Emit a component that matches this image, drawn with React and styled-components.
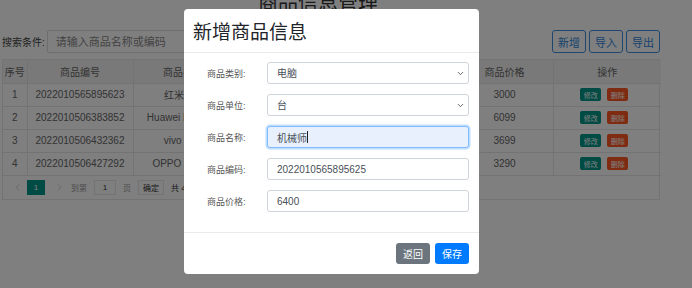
import styled, { createGlobalStyle } from 'styled-components'
import { ChevronDown, ChevronLeft, ChevronRight } from 'lucide-react'

const products = [
  { id: 1, code: '2022010565895623', name: '红米K50', type: '手机', unit: '台', price: 3000 },
  { id: 2, code: '2022010506383852', name: 'Huawei P50 Pro', type: '手机', unit: '台', price: 6099 },
  { id: 3, code: '2022010506432362', name: 'vivo S12', type: '手机', unit: '台', price: 3699 },
  { id: 4, code: '2022010506427292', name: 'OPPO Reno7', type: '手机', unit: '台', price: 3290 },
]

/*---> Component <---*/
function App() {
  return (
    <>
      <GlobalStyle />
      <Page>
        <Title>商品信息管理</Title>
        <Toolbar>
          <SearchLabel>搜索条件:</SearchLabel>
          <SearchInput placeholder="请输入商品名称或编码" />
          <Spacer />
          <OutlineButton>新增</OutlineButton>
          <OutlineButton>导入</OutlineButton>
          <OutlineButton>导出</OutlineButton>
        </Toolbar>
        <TableBox>
          <Table>
            <colgroup>
              <col width="24" />
              <col width="106" />
              <col width="100" />
              <col width="110" />
              <col width="113" />
              <col width="97" />
              <col width="108" />
            </colgroup>
            <thead>
              <tr>
                <Th>序号</Th>
                <Th>商品编号</Th>
                <Th>商品名称</Th>
                <Th>商品类别</Th>
                <Th>商品单位</Th>
                <Th>商品价格</Th>
                <Th>操作</Th>
              </tr>
            </thead>
            <tbody>
              {products.map((p) => (
                <tr key={p.id}>
                  <Td>{p.id}</Td>
                  <Td>{p.code}</Td>
                  <Td>{p.name}</Td>
                  <Td>{p.type}</Td>
                  <Td>{p.unit}</Td>
                  <Td>{p.price}</Td>
                  <Td>
                    <Actions>
                      <SmallButton $color="#009688">修改</SmallButton>
                      <SmallButton $color="#ff5722">删除</SmallButton>
                    </Actions>
                  </Td>
                </tr>
              ))}
            </tbody>
          </Table>
          <Pager>
            <PagerArrow><ChevronLeft size={11} strokeWidth={1.5} /></PagerArrow>
            <PageCurrent>1</PageCurrent>
            <PagerArrow><ChevronRight size={11} strokeWidth={1.5} /></PagerArrow>
            <PagerText>到第</PagerText>
            <PagerInput>1</PagerInput>
            <PagerText>页</PagerText>
            <PagerButton>确定</PagerButton>
            <PagerText $dark>共 4 条</PagerText>
          </Pager>
        </TableBox>
      </Page>

      <Overlay>
        <Dialog>
          <DialogHeader>新增商品信息</DialogHeader>
          <DialogBody>
            <FormRow>
              <FieldLabel>商品类别:</FieldLabel>
              <SelectWrap>
                <Select defaultValue="电脑">
                  <option>电脑</option>
                  <option>手机</option>
                </Select>
                <Caret><ChevronDown size={9} strokeWidth={2} /></Caret>
              </SelectWrap>
            </FormRow>
            <FormRow>
              <FieldLabel>商品单位:</FieldLabel>
              <SelectWrap>
                <Select defaultValue="台">
                  <option>台</option>
                  <option>个</option>
                </Select>
                <Caret><ChevronDown size={9} strokeWidth={2} /></Caret>
              </SelectWrap>
            </FormRow>
            <FormRow>
              <FieldLabel>商品名称:</FieldLabel>
              <Field $focused>
                机械师<Cursor />
              </Field>
            </FormRow>
            <FormRow>
              <FieldLabel>商品编码:</FieldLabel>
              <Field>2022010565895625</Field>
            </FormRow>
            <FormRow>
              <FieldLabel>商品价格:</FieldLabel>
              <Field>6400</Field>
            </FormRow>
          </DialogBody>
          <DialogFooter>
            <SolidButton $color="#6c757d">返回</SolidButton>
            <SolidButton $color="#007bff">保存</SolidButton>
          </DialogFooter>
        </Dialog>
      </Overlay>
    </>
  )
}

/*---> Styles <---*/
const GlobalStyle = createGlobalStyle`
  html, body {
    margin: 0;
    padding: 0;
    background: #fff;
    overflow: hidden;
    font-family: "Liberation Sans", "Noto Sans CJK SC", sans-serif;
  }
  * {
    box-sizing: border-box;
  }
`

const Page = styled.div`
  width: 692px;
  height: 288px;
  padding: 0 32px 0 2px;
  margin-top: -9px;
`

const Title = styled.h2`
  margin: 0;
  padding-left: 256px;
  font-size: 20px;
  font-weight: 400;
  line-height: 24px;
  height: 23px;
  color: #333;
`

const Toolbar = styled.div`
  display: flex;
  align-items: center;
  height: 23px;
  margin-top: 16px;
`

const SearchLabel = styled.span`
  font-size: 10px;
  color: #444;
  margin-right: 2px;
`

const SearchInput = styled.input`
  width: 260px;
  height: 23px;
  border: 1px solid #dcdcdc;
  border-radius: 2px;
  padding: 0 8px;
  font-size: 11px;
  font-family: inherit;
  &::placeholder {
    color: #888;
  }
`

const Spacer = styled.div`
  flex: 1;
`

const OutlineButton = styled.button`
  height: 23px;
  width: 34px;
  margin-left: 3px;
  padding: 0;
  border: 1px solid #3d8fe0;
  border-radius: 3px;
  background: #fff;
  color: #2f86dc;
  font-size: 11px;
  font-family: inherit;
`

const TableBox = styled.div`
  margin-top: 6px;
  width: 658px;
  border: 1px solid #e6e6e6;
`

const Table = styled.table`
  width: 100%;
  border-collapse: collapse;
  table-layout: fixed;
`

const Th = styled.th`
  height: 23px;
  background: #f2f2f2;
  border-right: 1px solid #e6e6e6;
  border-bottom: 1px solid #e6e6e6;
  font-size: 10px;
  font-weight: 400;
  color: #666;
  text-align: center;
  padding: 0;
  &:last-child {
    border-right: 0;
  }
`

const Td = styled.td`
  height: 23px;
  border-right: 1px solid #e6e6e6;
  border-bottom: 1px solid #e6e6e6;
  font-size: 10px;
  color: #666;
  text-align: center;
  padding: 0;
  white-space: nowrap;
  overflow: hidden;
  &:last-child {
    border-right: 0;
  }
`

const Actions = styled.div`
  display: flex;
  justify-content: center;
  gap: 6px;
  padding-right: 6px;
`

const SmallButton = styled.span`
  display: inline-flex;
  align-items: center;
  justify-content: center;
  width: 21px;
  height: 13px;
  border-radius: 2px;
  background: ${(p) => p.$color};
  color: #fff;
  font-size: 7px;
`

const Pager = styled.div`
  display: flex;
  align-items: center;
  height: 23px;
  padding-left: 9px;
  font-size: 8px;
`

const PagerArrow = styled.span`
  display: flex;
  align-items: center;
  color: #bbb;
  margin: 0 4px 0 0;
`

const PageCurrent = styled.span`
  display: flex;
  align-items: center;
  justify-content: center;
  width: 18px;
  height: 15px;
  background: #009688;
  color: #fff;
  font-size: 8px;
  margin-right: 9px;
`

const PagerText = styled.span`
  color: ${(p) => (p.$dark ? '#333' : '#999')};
  margin: 0 7px 0 2px;
`

const PagerInput = styled.span`
  display: flex;
  align-items: center;
  justify-content: center;
  width: 22px;
  height: 15px;
  border: 1px solid #e6e6e6;
  color: #333;
  font-size: 8px;
  margin-right: 5px;
`

const PagerButton = styled.span`
  display: flex;
  align-items: center;
  justify-content: center;
  width: 26px;
  height: 15px;
  border: 1px solid #e6e6e6;
  color: #333;
  margin-right: 5px;
`

const Overlay = styled.div`
  position: fixed;
  inset: 0;
  background: rgba(0, 0, 0, 0.5);
  padding: 9px 0 0 184px;
`

const Dialog = styled.div`
  width: 295px;
  height: 265px;
  background: #fff;
  border-radius: 4px;
  display: flex;
  flex-direction: column;
`

const DialogHeader = styled.div`
  height: 44px;
  display: flex;
  align-items: center;
  padding: 0 9px;
  border-bottom: 1px solid #e9ecef;
  font-size: 19px;
  color: #212529;
`

const DialogBody = styled.div`
  display: flex;
  flex-direction: column;
  gap: 10px;
  padding: 9px 10px 20px 0;
  border-bottom: 1px solid #e9ecef;
`

const FormRow = styled.div`
  display: flex;
  align-items: center;
  height: 22px;
`

const FieldLabel = styled.label`
  width: 83px;
  padding-left: 23px;
  font-size: 9px;
  color: #555;
`

const SelectWrap = styled.div`
  position: relative;
  flex: 1;
`

const Select = styled.select`
  appearance: none;
  width: 100%;
  height: 22px;
  border: 1px solid #ced4da;
  border-radius: 3px;
  padding: 0 9px;
  background: #fff;
  font-size: 10px;
  font-family: inherit;
  color: #495057;
`

const Caret = styled.span`
  position: absolute;
  right: 4px;
  top: 7px;
  display: flex;
  color: #333;
`

const Field = styled.div`
  flex: 1;
  height: 22px;
  display: flex;
  align-items: center;
  border: 1px solid ${(p) => (p.$focused ? '#80bdff' : '#ced4da')};
  border-radius: 3px;
  padding: 0 9px;
  background: ${(p) => (p.$focused ? '#e8f0fe' : '#fff')};
  box-shadow: ${(p) => (p.$focused ? '0 0 0 1.5px rgba(0, 123, 255, 0.25)' : 'none')};
  font-size: 10px;
  color: #495057;
`

const Cursor = styled.span`
  display: inline-block;
  width: 1px;
  height: 12px;
  background: #222;
`

const DialogFooter = styled.div`
  flex: 1;
  display: flex;
  align-items: center;
  justify-content: flex-end;
  gap: 5px;
  padding: 0 10px;
`

const SolidButton = styled.button`
  width: 34px;
  height: 21px;
  padding: 0;
  border: 0;
  border-radius: 3px;
  background: ${(p) => p.$color};
  color: #fff;
  font-size: 10px;
  font-family: inherit;
`

export default App
